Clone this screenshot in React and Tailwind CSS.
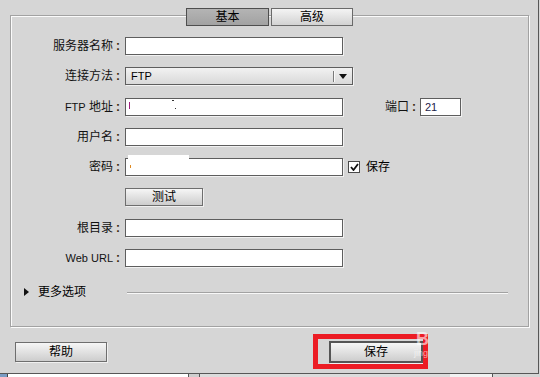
const font = "font-['Liberation_Sans','Noto_Sans_CJK_SC',sans-serif]";

const Label = ({ children, className = '' }) => (
  <div className={`whitespace-nowrap text-right text-[12px] leading-[18px] text-[#111] ${className}`}>
    {children}
    <span className="ml-[3px] font-bold text-[#3a2a10]">:</span>
  </div>
);

const Field = ({ className = 'w-[218px]', children }) => (
  <div
    className={`relative h-[18px] bg-white border border-[#5e5e5e] shadow-[1px_1px_0_#f2f2f2] ${className}`}
  >
    {children}
  </div>
);

const Button = ({ children, className = '' }) => (
  <div
    className={`flex items-center justify-center bg-gradient-to-b from-[#f6f6f6] to-[#cdcdcd] border border-[#6e6e6e] shadow-[1px_1px_0_#f0f0f0] text-[12px] text-black ${className}`}
  >
    {children}
  </div>
);

const Row = ({ className = '', children }) => (
  <div className={`flex items-center h-[18px] ${className}`}>{children}</div>
);

export default function App() {
  return (
    <div className={`w-[540px] h-[377px] bg-[#d6d6d6] overflow-hidden ${font}`}>
      <div className="relative w-[539px] h-[374px] border-r border-b border-[#575757] pt-[8px] pl-[10px]">
        {/* tabs */}
        <div className="relative z-10 flex justify-center gap-[2px] w-[519px]">
          <div className="w-[83px] h-[18px] flex items-center justify-center bg-gradient-to-b from-[#b4b4b4] to-[#a2a2a2] border border-[#4e4e4e] text-[12px] text-black">
            基本
          </div>
          <div className="w-[82px] h-[18px] flex items-center justify-center bg-gradient-to-b from-[#f4f4f4] to-[#d2d2d2] border border-[#6a6a6a] text-[12px] text-black">
            高级
          </div>
        </div>

        {/* group box */}
        <div className="-mt-[11px] w-[519px] h-[312px] border border-[#a2a2a2] shadow-[inset_1px_1px_0_#fbfbfb,1px_1px_0_#fbfbfb] pt-[21px]">
          <Row>
            <Label className="w-[109px]">服务器名称</Label>
            <Field className="ml-[5px] w-[218px]" />
          </Row>

          <Row className="mt-[12px]">
            <Label className="w-[109px]">连接方法</Label>
            <div className="ml-[5px] w-[228px] h-[18px] flex items-center bg-gradient-to-b from-[#f2f2f2] to-[#d9d9d9] border border-[#5e5e5e] shadow-[1px_1px_0_#f2f2f2]">
              <span className="ml-[5px] text-[11px] text-black flex-1">FTP</span>
              <div className="w-px h-[11px] bg-[#7a7a7a] shadow-[1px_0_0_#fafafa]" />
              <svg className="ml-[5px] mr-[5px]" width="8" height="5" viewBox="0 0 8 5">
                <path d="M0 0h8L4 5z" fill="#111" />
              </svg>
            </div>
          </Row>

          <Row className="mt-[13px]">
            <Label className="w-[109px]">
              <span className="text-[11px]">FTP</span> 地址
            </Label>
            <Field className="ml-[5px] w-[218px]">
              <span className="absolute left-[3px] top-[3px] w-px h-[7px] bg-[#a2207e]" />
              <span className="absolute left-[46px] top-[1px] w-[2px] h-px bg-[#333]" />
              <span className="absolute left-[49px] top-[9px] w-px h-px bg-[#333]" />
            </Field>
            <Label className="ml-[41px] w-[32px]">端口</Label>
            <Field className="ml-[4px] w-[41px]">
              <span className="absolute left-[4px] top-[1px] text-[11px] leading-[14px] text-[#1c1c4a]">21</span>
            </Field>
          </Row>

          <Row className="mt-[12px]">
            <Label className="w-[109px]">用户名</Label>
            <Field className="ml-[5px] w-[218px]" />
          </Row>

          <Row className="mt-[12px]">
            <Label className="w-[109px]">密码</Label>
            <Field className="ml-[5px] w-[218px]">
              <span className="absolute -top-[4px] left-[2px] w-[61px] h-[4px] bg-white" />
              <span className="absolute left-[4px] top-[6px] w-px h-[3px] bg-[#e08a20]" />
            </Field>
            <div className="ml-[5px] w-[12px] h-[12px] bg-white border border-[#4a4a4a] flex items-center justify-center">
              <svg width="9" height="8" viewBox="0 0 9 8">
                <path d="M1 4l2.5 3L8 1" stroke="#111" strokeWidth="1.8" fill="none" />
              </svg>
            </div>
            <span className="ml-[6px] text-[12px] leading-[18px] text-black">保存</span>
          </Row>

          <Row className="mt-[12px]">
            <div className="w-[109px]" />
            <Button className="ml-[5px] w-[78px] h-[18px]">测试</Button>
          </Row>

          <Row className="mt-[13px]">
            <Label className="w-[109px]">根目录</Label>
            <Field className="ml-[5px] w-[218px]" />
          </Row>

          <Row className="mt-[12px]">
            <Label className="w-[109px]">
              <span className="text-[11px]">Web URL</span>
            </Label>
            <Field className="ml-[5px] w-[218px]" />
          </Row>

          <div className="mt-[17px] flex items-center h-[16px]">
            <svg className="ml-[13px]" width="5" height="8" viewBox="0 0 5 8">
              <path d="M0 0v8l5-4z" fill="#111" />
            </svg>
            <span className="ml-[9px] text-[12px] leading-[16px] text-black">更多选项</span>
            <div className="ml-[41px] w-[381px] h-px bg-[#a2a2a2] shadow-[0_1px_0_#f8f8f8]" />
          </div>
        </div>

        {/* bottom buttons */}
        <div className="mt-[14px] flex items-start">
          <Button className="mt-px ml-[5px] w-[92px] h-[20px]">帮助</Button>
          <Button className="ml-[222px] w-[94px] h-[22px] border-2 border-[#555]">保存</Button>
        </div>

        {/* annotation overlay */}
        <div className="absolute left-[313px] top-[334px] w-[115px] h-[35px] border-[5px] border-[#ec1c24]" />
        <div className="absolute left-[416px] top-[330px] text-[18px] leading-[18px] font-bold text-white/60">
          B
        </div>
        <div className="absolute left-[414px] top-[348px] text-[9px] leading-[10px] text-white/60">
          jing
        </div>
      </div>

      {/* window behind */}
      <div className="flex h-[3px]">
        <div className="w-[8px] bg-[#7a9cc4] border-r border-[#444]" />
        <div className="w-[180px] bg-white" />
        <div className="w-[12px] bg-[#cfcfcf] border-x border-[#555]" />
        <div className="w-[250px] bg-[#dcdcdc]" />
        <div className="w-[42px] bg-[#f2f2f2]" />
        <div className="w-px bg-[#555]" />
        <div className="flex-1 bg-[#d6d6d6]" />
      </div>
    </div>
  );
}
